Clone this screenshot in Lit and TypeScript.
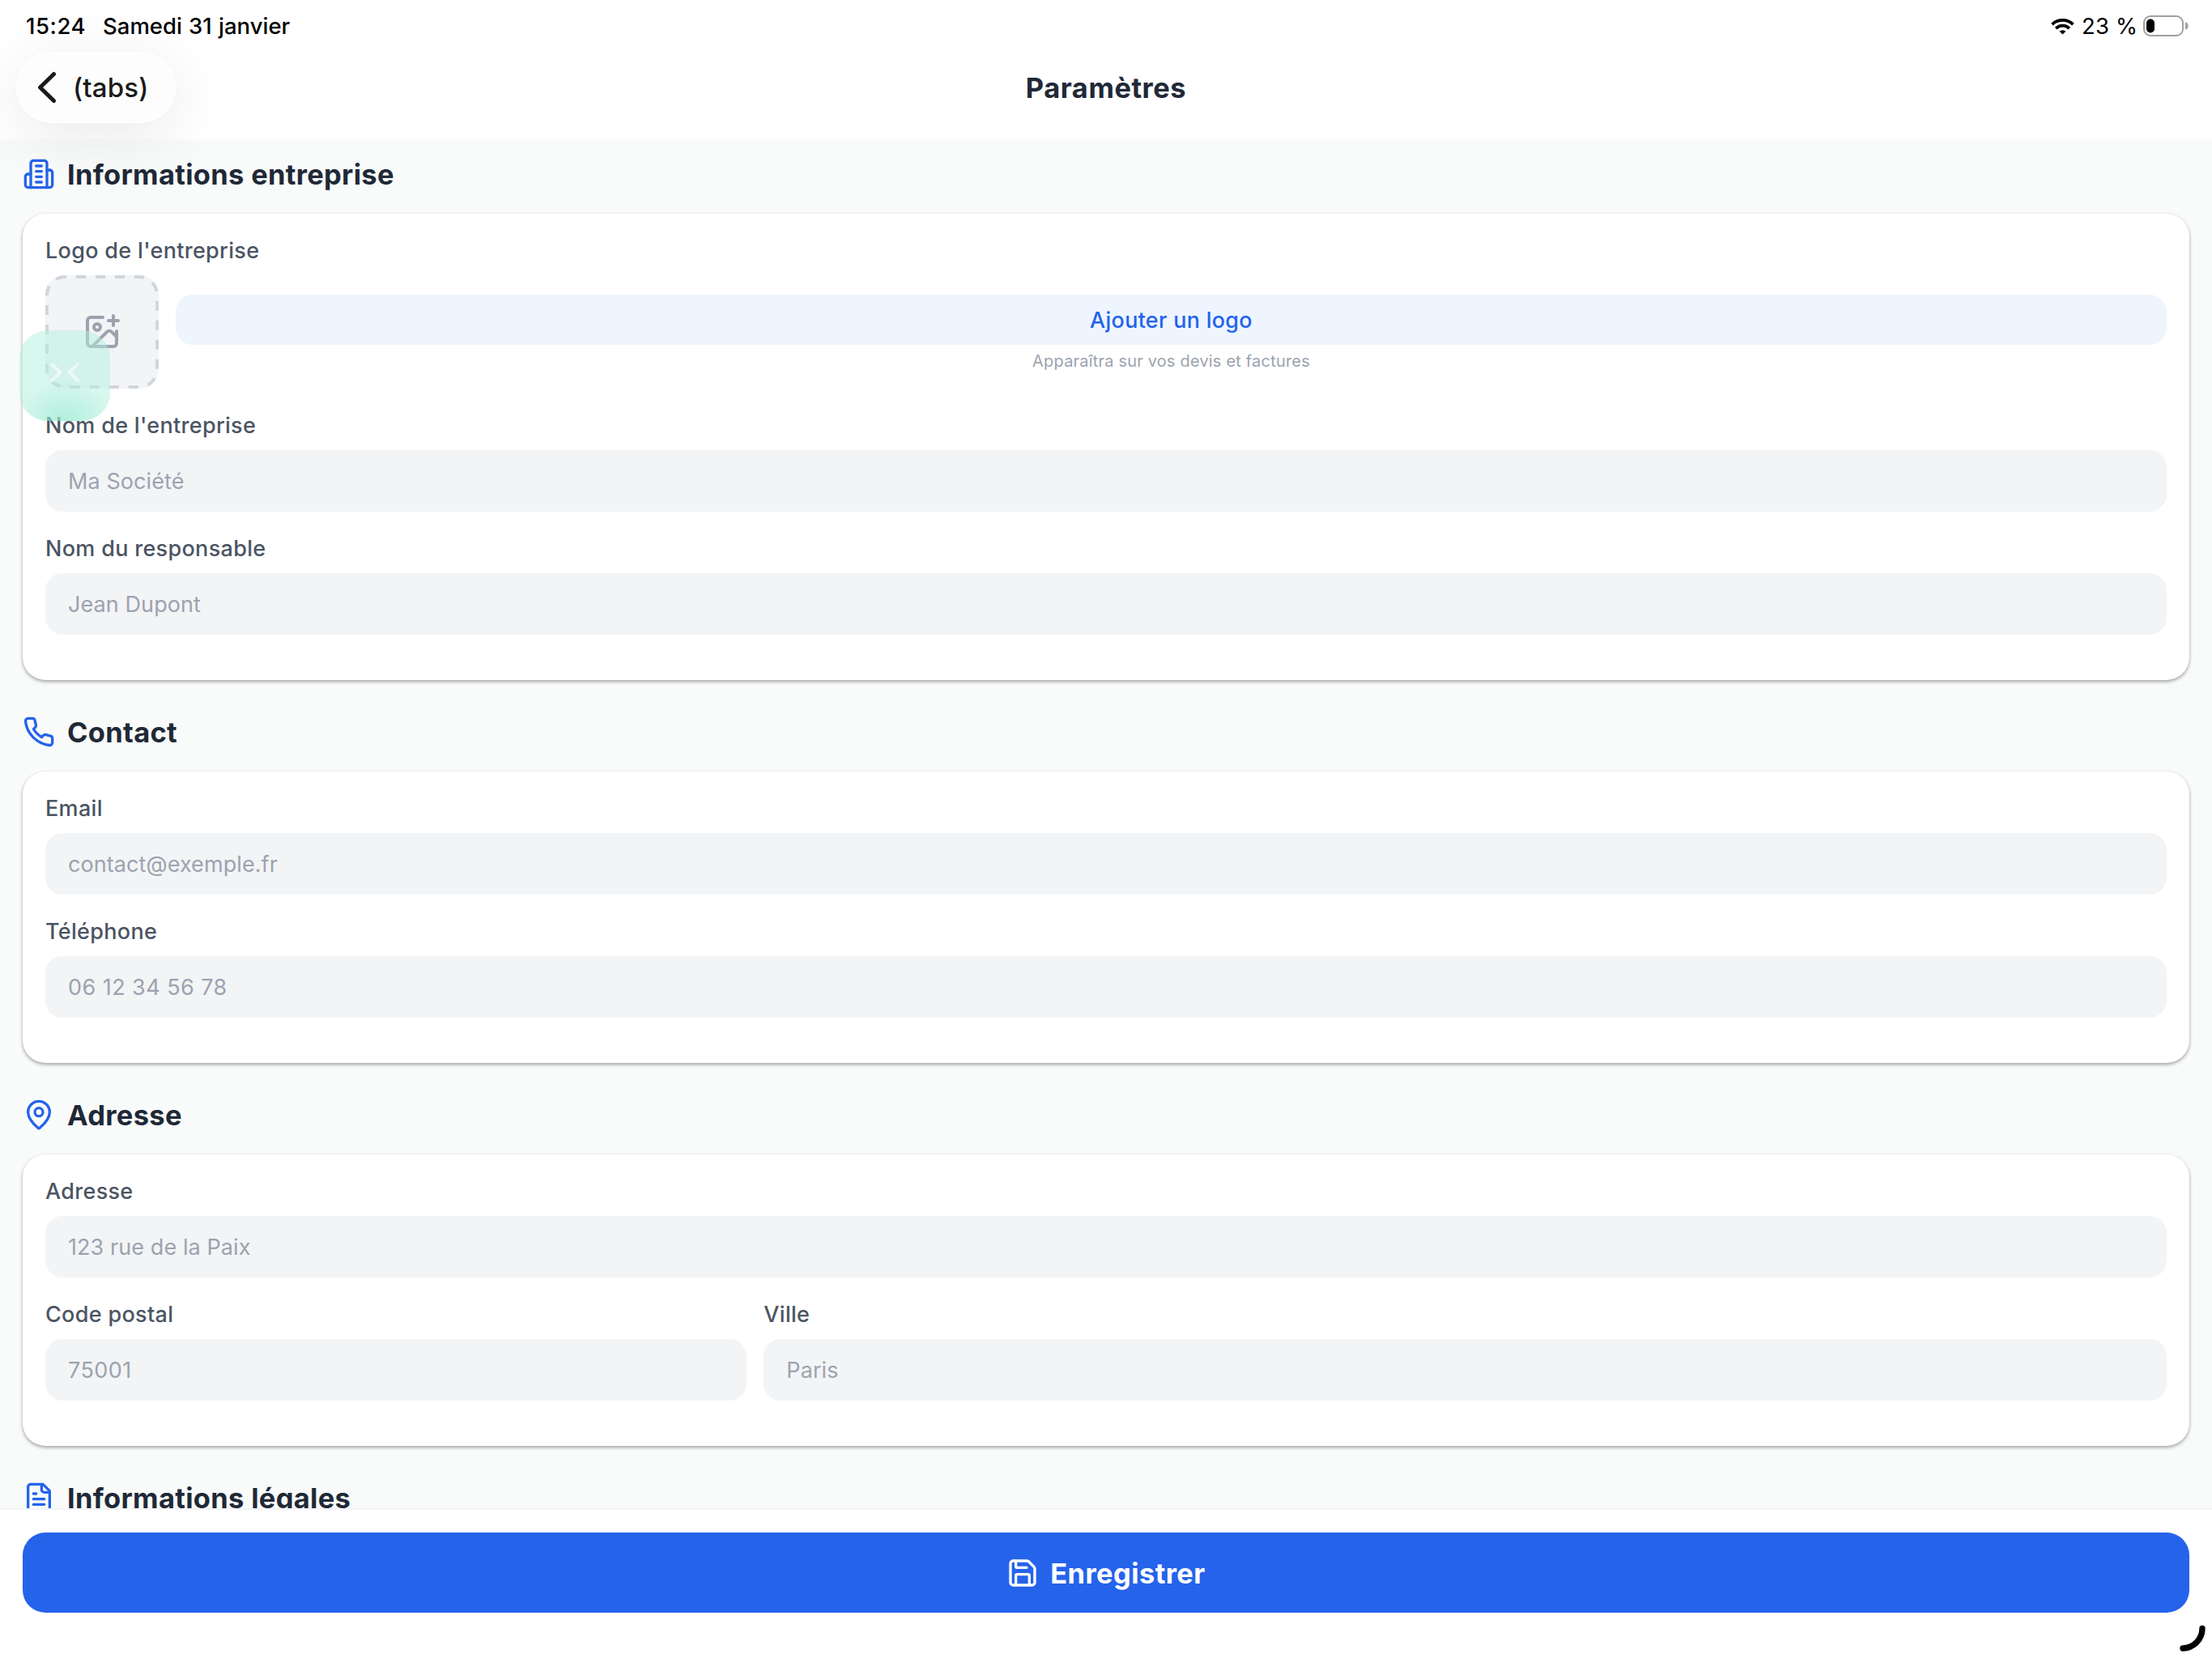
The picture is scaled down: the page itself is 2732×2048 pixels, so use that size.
import { LitElement, html, css, svg, nothing, type TemplateResult } from "lit";
import { customElement, property } from "lit/decorators.js";
import { classMap } from "lit/directives/class-map.js";

const ICONS: Record<string, TemplateResult> = {
  building: svg`<path d="M6 22V4a2 2 0 0 1 2-2h8a2 2 0 0 1 2 2v18Z"/><path d="M6 12H4a2 2 0 0 0-2 2v6a2 2 0 0 0 2 2h2"/><path d="M18 9h2a2 2 0 0 1 2 2v9a2 2 0 0 1-2 2h-2"/><path d="M10 6h4"/><path d="M10 10h4"/><path d="M10 14h4"/><path d="M10 18h4"/>`,
  phone: svg`<path d="M22 16.92v3a2 2 0 0 1-2.18 2 19.79 19.79 0 0 1-8.63-3.07 19.5 19.5 0 0 1-6-6 19.79 19.79 0 0 1-3.07-8.67A2 2 0 0 1 4.11 2h3a2 2 0 0 1 2 1.72 12.84 12.84 0 0 0 .7 2.81 2 2 0 0 1-.45 2.11L8.09 9.91a16 16 0 0 0 6 6l1.27-1.27a2 2 0 0 1 2.11-.45 12.84 12.84 0 0 0 2.81.7A2 2 0 0 1 22 16.92z"/>`,
  pin: svg`<path d="M20 10c0 4.993-5.539 10.193-7.399 11.799a1 1 0 0 1-1.202 0C9.539 20.193 4 14.993 4 10a8 8 0 0 1 16 0"/><circle cx="12" cy="10" r="3"/>`,
  file: svg`<path d="M15 2H6a2 2 0 0 0-2 2v16a2 2 0 0 0 2 2h12a2 2 0 0 0 2-2V7Z"/><path d="M14 2v4a2 2 0 0 0 2 2h4"/><path d="M10 9H8"/><path d="M16 13H8"/><path d="M16 17H8"/>`,
  imagePlus: svg`<path d="M16 5h6"/><path d="M19 2v6"/><path d="M21 11.5V19a2 2 0 0 1-2 2H5a2 2 0 0 1-2-2V5a2 2 0 0 1 2-2h7.5"/><path d="m21 15-3.086-3.086a2 2 0 0 0-2.828 0L6 21"/><circle cx="9" cy="9" r="2"/>`,
  save: svg`<path d="M15.2 3a2 2 0 0 1 1.4.6l3.8 3.8a2 2 0 0 1 .6 1.4V19a2 2 0 0 1-2 2H5a2 2 0 0 1-2-2V5a2 2 0 0 1 2-2z"/><path d="M17 21v-7a1 1 0 0 0-1-1H8a1 1 0 0 0-1 1v7"/><path d="M7 3v4a1 1 0 0 0 1 1h7"/>`,
};

@customElement("line-icon")
class LineIcon extends LitElement {
  @property() name = "";
  static styles = css`
    :host { display: block; flex: none; width: 40px; height: 40px; }
    .glyph {
      display: block; width: 100%; height: 100%; fill: none; stroke: currentColor;
      stroke-width: 2; stroke-linecap: round; stroke-linejoin: round;
    }
  `;
  render() {
    return html`<svg class="glyph" viewBox="0 0 24 24">${ICONS[this.name]}</svg>`;
  }
}

@customElement("form-field")
class FormField extends LitElement {
  @property() label = "";
  @property() hint = "";
  static styles = css`
    :host { display: block; min-width: 0; }
    .label {
      display: block; font-size: 27px; font-weight: 500; line-height: 36px;
      letter-spacing: 0.31px; color: #4b5563; white-space: nowrap; margin-bottom: 12px;
    }
    .input {
      display: block; box-sizing: border-box; width: 100%; height: 76px; border: 0; outline: 0;
      border-radius: 21px; background: #f3f4f6; padding: 0 28px; margin: 0;
      font-family: inherit; font-size: 27px; letter-spacing: 0.08px; color: #1f2937;
    }
    .input.digits { letter-spacing: 0.45px; }
    .input::placeholder { color: #9ca3af; opacity: 1; }
  `;
  render() {
    const digits = /^[\d ]+$/.test(this.hint);
    return html`
      <label class="label" for="field">${this.label}</label>
      <input id="field" class=${classMap({ input: true, digits })} placeholder=${this.hint} />
    `;
  }
}

@customElement("form-section")
class FormSection extends LitElement {
  @property() icon = "";
  @property() heading = "";
  static styles = css`
    :host { display: block; }
    .head { display: flex; align-items: center; gap: 15px; height: 42px; margin-bottom: 28px; color: #2563eb; }
    .title {
      margin: 0; padding-top: 1px; font-size: 34.5px; font-weight: 700; line-height: 42px;
      letter-spacing: 0.3px; color: #1f2937; white-space: nowrap;
    }
    .card {
      display: flex; flex-direction: column; gap: 28px; padding: 28px 28px 56px;
      background: #fff; border-radius: 28px; box-shadow: 0 2px 4px rgba(0, 0, 0, 0.36);
    }
  `;
  render() {
    return html`
      <div class="head">
        <line-icon name=${this.icon}></line-icon>
        <h2 class="title">${this.heading}</h2>
      </div>
      <div class="card"><slot></slot></div>
    `;
  }
}

@customElement("logo-picker")
class LogoPicker extends LitElement {
  static styles = css`
    :host { display: block; }
    .label {
      font-size: 27px; font-weight: 500; line-height: 36px; letter-spacing: 0.31px;
      color: #4b5563; margin-bottom: 12px;
    }
    .row { display: flex; gap: 21px; }
    .drop {
      display: grid; place-items: center; flex: none; width: 140px; height: 140px;
      border-radius: 24px; background: #f3f4f6; color: #9ca3af;
    }
    .drop > * { grid-area: 1 / 1; }
    .outline { display: block; width: 140px; height: 140px; fill: none; stroke: #d1d5db; stroke-width: 4; }
    .picture { width: 48px; height: 48px; }
    .side { flex: 1; display: flex; flex-direction: column; padding-top: 24px; text-align: center; }
    .add {
      height: 62px; border: 0; border-radius: 21px; background: #eef5fe; color: #2563eb; padding: 0;
      font-family: inherit; font-size: 27px; font-weight: 500; letter-spacing: 0.27px;
    }
    .note { margin-top: 5px; font-size: 20px; line-height: 31px; letter-spacing: 0.19px; color: #9ca3af; }
  `;
  render() {
    return html`
      <div class="label">Logo de l'entreprise</div>
      <div class="row">
        <div class="drop">
          <svg class="outline" viewBox="0 0 140 140">
            <path
              stroke-dasharray="12 12" stroke-dashoffset="10"
              d="M24 2H116A22 22 0 0 1 138 24V116A22 22 0 0 1 116 138H24A22 22 0 0 1 2 116V24A22 22 0 0 1 24 2"
            />
          </svg>
          <line-icon class="picture" name="imagePlus"></line-icon>
        </div>
        <div class="side">
          <button class="add">Ajouter un logo</button>
          <div class="note">Apparaîtra sur vos devis et factures</div>
        </div>
      </div>
    `;
  }
}

@customElement("status-bar")
class StatusBar extends LitElement {
  static styles = css`
    :host {
      display: flex; align-items: center; height: 64px; box-sizing: border-box; padding: 0 29px 0 32px;
      font-size: 27.5px; font-weight: 500; color: #000; white-space: pre;
    }
    .time { letter-spacing: 0.58px; width: 95px; }
    .date { letter-spacing: 0; word-spacing: 0.9px; flex: 1; }
    .wifi { width: 29px; height: 21px; margin-right: 9px; }
    .level { font-weight: 400; letter-spacing: 0.2px; width: 76px; }
    .battery { width: 56px; height: 26px; }
  `;
  render() {
    return html`
      <span class="time">15:24</span>
      <span class="date">Samedi 31 janvier</span>
      <svg class="wifi" viewBox="0 0 29 21">
        <g fill="none" stroke="#000" stroke-width="3.8">
          <path d="M1.5 8.1A18.6 18.6 0 0 1 27.5 8.1" />
          <path d="M6.2 13.1A11.8 11.8 0 0 1 22.8 13.1" />
        </g>
        <path d="M14.5 20.6 L10.6 16.8 A5.6 5.6 0 0 1 18.4 16.8 Z" />
      </svg>
      <span class="level">23 %</span>
      <svg class="battery" viewBox="0 0 56 26">
        <rect x="1" y="1" width="48" height="24" rx="8" fill="none" stroke="#a0a0a0" stroke-width="2" />
        <rect x="4" y="4.5" width="10" height="17" rx="5" />
        <path d="M52 8.5a4.6 4.6 0 0 1 0 9z" fill="#a0a0a0" />
      </svg>
    `;
  }
}

interface Field { label: string; hint: string }
interface Section { icon: string; heading: string; logo?: boolean; rows: Field[][] }

const SECTIONS: Section[] = [
  {
    icon: "building", heading: "Informations entreprise", logo: true,
    rows: [
      [{ label: "Nom de l'entreprise", hint: "Ma Société" }],
      [{ label: "Nom du responsable", hint: "Jean Dupont" }],
    ],
  },
  {
    icon: "phone", heading: "Contact",
    rows: [
      [{ label: "Email", hint: "contact@exemple.fr" }],
      [{ label: "Téléphone", hint: "06 12 34 56 78" }],
    ],
  },
  {
    icon: "pin", heading: "Adresse",
    rows: [
      [{ label: "Adresse", hint: "123 rue de la Paix" }],
      [{ label: "Code postal", hint: "75001" }, { label: "Ville", hint: "Paris" }],
    ],
  },
  { icon: "file", heading: "Informations légales", rows: [] },
];

@customElement("app-root")
class AppRoot extends LitElement {
  static styles = css`
    :host {
      display: block; position: relative; width: 2732px; height: 2048px; overflow: hidden;
      background: #fff; font-family: Inter, "Liberation Sans", sans-serif;
    }
    .screen { display: flex; flex-direction: column; height: 100%; }
    .top { flex: none; height: 172px; position: relative; z-index: 1; }
    .nav {
      display: grid; grid-template-columns: 1fr auto 1fr; align-items: center;
      height: 88px; padding: 0 20px;
    }
    .back {
      justify-self: start; display: flex; align-items: center; box-sizing: border-box;
      width: 197px; height: 88px; padding: 0 0 0 24px; border: 2px solid #fff; border-radius: 44px;
      background: #fdfdfd; box-shadow: 0 14px 76px rgba(0, 0, 0, 0.09); color: #1a1a1a;
      font-family: inherit; font-size: 33px; font-weight: 500; letter-spacing: 0.15px;
    }
    .chevron {
      width: 24px; height: 40px; margin-right: 20px; fill: none; stroke: currentColor;
      stroke-width: 5; stroke-linecap: round; stroke-linejoin: round;
    }
    .title { margin: 0; font-size: 34.5px; font-weight: 700; letter-spacing: 0.5px; color: #1f2937; }
    .content {
      flex: 1; min-height: 0; overflow: hidden; background: #f9fbfa; padding: 22px 28px 0;
      display: flex; flex-direction: column; gap: 43px;
    }
    .content > * { flex: none; }
    .columns { display: grid; grid-template-columns: 1fr 2fr; gap: 21px; }
    .footer { flex: none; box-sizing: border-box; height: 185px; border-top: 2px solid #f3f4f6; padding: 28px; background: #fff; }
    .save {
      display: flex; align-items: center; justify-content: center; gap: 14px; width: 100%; height: 99px;
      border: 0; border-radius: 28px; background: #2563eb; color: #fff; padding: 1px 0 0;
      font-family: inherit; font-size: 34.5px; font-weight: 700; letter-spacing: 0.4px;
    }
    .bubble {
      position: absolute; z-index: 2; left: 24px; top: 408px; width: 112px; height: 112px; border-radius: 35px;
      background:
        radial-gradient(60px 50px at 50% 100%, rgba(120, 228, 196, 0.42), rgba(120, 228, 196, 0)),
        rgba(177, 239, 221, 0.5);
    }
    .arrows {
      display: block; width: 112px; height: 112px; fill: none; stroke: rgba(255, 255, 255, 0.55);
      stroke-width: 4; stroke-linecap: round; stroke-linejoin: round;
    }
    .corner {
      position: absolute; right: 0; bottom: 0; width: 44px; height: 44px; fill: none;
      stroke: #000; stroke-width: 7.4; stroke-linecap: round;
    }
  `;

  private field(f: Field) {
    return html`<form-field label=${f.label} hint=${f.hint}></form-field>`;
  }

  private section(s: Section) {
    return html`
      <form-section icon=${s.icon} heading=${s.heading}>
        ${s.logo ? html`<logo-picker></logo-picker>` : nothing}
        ${s.rows.map((row) =>
          row.length === 1 ? this.field(row[0]) : html`<div class="columns">${row.map((f) => this.field(f))}</div>`,
        )}
      </form-section>
    `;
  }

  render() {
    return html`
      <div class="screen">
        <header class="top">
          <status-bar></status-bar>
          <div class="nav">
            <button class="back">
              <svg class="chevron" viewBox="0 0 24 40"><path d="M20.5 3.5 L3.5 20 L20.5 36.5" /></svg>(tabs)
            </button>
            <h1 class="title">Paramètres</h1>
          </div>
        </header>
        <main class="content">${SECTIONS.map((s) => this.section(s))}</main>
        <footer class="footer">
          <button class="save"><line-icon name="save"></line-icon>Enregistrer</button>
        </footer>
      </div>
      <div class="bubble">
        <svg class="arrows" viewBox="0 0 112 112">
          <path d="M40 42 L50.5 52 L40 62" /><path d="M72 42 L61.5 52 L72 62" />
        </svg>
      </div>
      <svg class="corner" viewBox="0 0 44 44"><path d="M32 7.5 A24.5 24.5 0 0 1 8 32" /></svg>
    `;
  }
}
